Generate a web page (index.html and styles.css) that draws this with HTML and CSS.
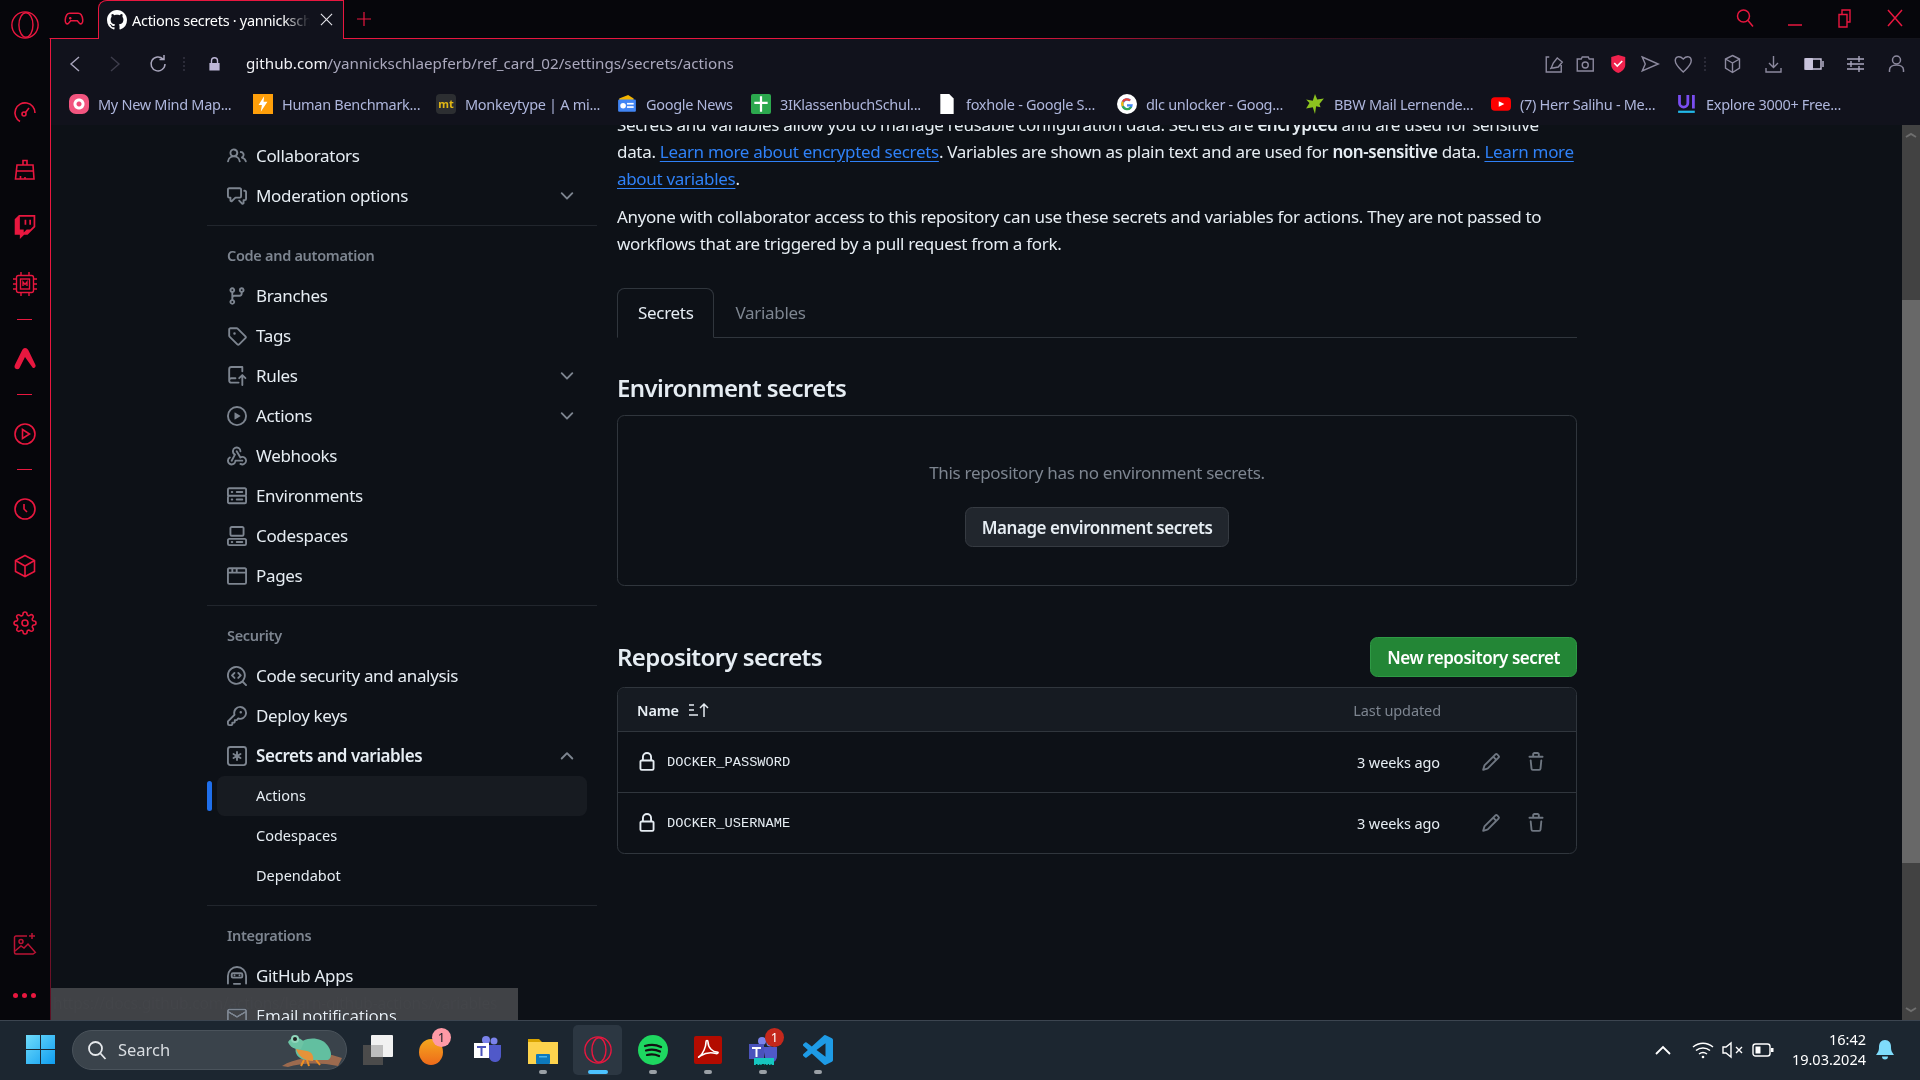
FILE: index.html
```html
<!DOCTYPE html>
<html lang="en">
<head>
<meta charset="UTF-8" />
<title>Actions secrets</title>
<link rel="stylesheet" href="styles.css">
</head>
<body>
<svg class="sprite" xmlns="http://www.w3.org/2000/svg">
  <symbol id="i-people" viewBox="0 0 16 16"><path d="M2 5.5a3.5 3.5 0 1 1 5.898 2.549 5.508 5.508 0 0 1 3.034 4.084.75.75 0 1 1-1.482.235 4 4 0 0 0-7.9 0 .75.75 0 0 1-1.482-.236A5.507 5.507 0 0 1 3.102 8.05 3.493 3.493 0 0 1 2 5.5ZM11 4a3.001 3.001 0 0 1 2.22 5.018 5.01 5.01 0 0 1 2.56 3.012.749.749 0 0 1-.885.954.752.752 0 0 1-.549-.514 3.507 3.507 0 0 0-2.522-2.372.75.75 0 0 1-.574-.73v-.352a.75.75 0 0 1 .416-.672A1.5 1.5 0 0 0 11 5.5.75.75 0 0 1 11 4Zm-5.5-.5a2 2 0 1 0-.001 3.999A2 2 0 0 0 5.5 3.5Z"/></symbol>
  <symbol id="i-comment" viewBox="0 0 16 16"><path d="M1.75 1h8.5c.966 0 1.75.784 1.75 1.75v5.5A1.75 1.75 0 0 1 10.25 10H7.061l-2.574 2.573A1.458 1.458 0 0 1 2 11.543V10h-.25A1.75 1.75 0 0 1 0 8.25v-5.5C0 1.784.784 1 1.75 1ZM1.5 2.75v5.5c0 .138.112.25.25.25h1a.75.75 0 0 1 .75.75v2.19l2.72-2.72a.749.749 0 0 1 .53-.22h3.5a.25.25 0 0 0 .25-.25v-5.5a.25.25 0 0 0-.25-.25h-8.5a.25.25 0 0 0-.25.25Zm13 2a.25.25 0 0 0-.25-.25h-.5a.75.75 0 0 1 0-1.5h.5c.966 0 1.75.784 1.75 1.75v5.5A1.75 1.75 0 0 1 14.25 12H14v1.543a1.458 1.458 0 0 1-2.487 1.03L9.22 12.28a.749.749 0 0 1 .326-1.275.749.749 0 0 1 .734.215l2.22 2.22v-2.19a.75.75 0 0 1 .75-.75h1a.25.25 0 0 0 .25-.25Z"/></symbol>
  <symbol id="i-branch" viewBox="0 0 16 16"><path d="M9.5 3.25a2.25 2.25 0 1 1 3 2.122V6A2.5 2.5 0 0 1 10 8.5H6a1 1 0 0 0-1 1v1.128a2.251 2.251 0 1 1-1.5 0V5.372a2.25 2.25 0 1 1 1.5 0v1.836A2.493 2.493 0 0 1 6 7h4a1 1 0 0 0 1-1v-.628A2.25 2.25 0 0 1 9.5 3.25Zm-6 0a.75.75 0 1 0 1.5 0 .75.75 0 0 0-1.5 0Zm8.25-.75a.75.75 0 1 0 0 1.5.75.75 0 0 0 0-1.5ZM4.25 12a.75.75 0 1 0 0 1.5.75.75 0 0 0 0-1.5Z"/></symbol>
  <symbol id="i-tag" viewBox="0 0 16 16"><path d="M1 7.775V2.75C1 1.784 1.784 1 2.75 1h5.025c.464 0 .91.184 1.238.513l6.25 6.25a1.75 1.75 0 0 1 0 2.474l-5.026 5.026a1.75 1.75 0 0 1-2.474 0l-6.25-6.25A1.752 1.752 0 0 1 1 7.775Zm1.5 0c0 .066.026.13.073.177l6.25 6.25a.25.25 0 0 0 .354 0l5.025-5.025a.25.25 0 0 0 0-.354l-6.25-6.25a.25.25 0 0 0-.177-.073H2.75a.25.25 0 0 0-.25.25ZM6 5a1 1 0 1 1 0 2 1 1 0 0 1 0-2Z"/></symbol>
  <symbol id="i-push" viewBox="0 0 16 16"><path d="M1 2.5A2.5 2.5 0 0 1 3.5 0h8.75a.75.75 0 0 1 .75.75v3.5a.75.75 0 0 1-1.5 0V1.5h-8a1 1 0 0 0-1 1v6.708A2.493 2.493 0 0 1 3.5 9h3.25a.75.75 0 0 1 0 1.5H3.5a1 1 0 0 0 0 2h5.75a.75.75 0 0 1 0 1.5H3.5A2.5 2.5 0 0 1 1 11.5Zm13.23 7.79h-.001l-1.224-1.224v6.184a.75.75 0 0 1-1.5 0V9.066L10.28 10.29a.75.75 0 0 1-1.06-1.061l2.505-2.504a.75.75 0 0 1 1.06 0L15.29 9.23a.751.751 0 0 1-.018 1.042.751.751 0 0 1-1.042.018Z"/></symbol>
  <symbol id="i-play" viewBox="0 0 16 16"><path d="M8 0a8 8 0 1 1 0 16A8 8 0 0 1 8 0ZM1.5 8a6.5 6.5 0 1 0 13 0 6.5 6.5 0 0 0-13 0Zm4.879-2.773 4.264 2.559a.25.25 0 0 1 0 .428l-4.264 2.559A.25.25 0 0 1 6 10.559V5.442a.25.25 0 0 1 .379-.215Z"/></symbol>
  <symbol id="i-webhook" viewBox="0 0 16 16"><path d="M5.5 4.25a2.25 2.25 0 0 1 4.5 0 .75.75 0 0 0 1.5 0 3.75 3.75 0 1 0-6.14 2.889l-2.272 4.258a.75.75 0 0 0 1.324.706L7 7.25a.75.75 0 0 0-.309-1.015A2.25 2.25 0 0 1 5.5 4.25Z"/><path d="M7.364 3.607a.75.75 0 0 1 1.03.257l2.608 4.349a3.75 3.75 0 1 1-.628 6.785.75.75 0 0 1 .752-1.299 2.25 2.25 0 1 0-.033-3.88.75.75 0 0 1-1.03-.256L7.107 4.636a.75.75 0 0 1 .257-1.03Z"/><path d="M2.9 8.776A.75.75 0 0 1 2.625 9.8 2.25 2.25 0 1 0 6 11.75a.75.75 0 0 1 .75-.751h5.5a.75.75 0 0 1 0 1.5H7.425a3.751 3.751 0 1 1-5.55-3.998.75.75 0 0 1 1.024.274Z"/></symbol>
  <symbol id="i-server" viewBox="0 0 16 16"><path d="M1.75 1h12.5c.966 0 1.75.784 1.75 1.75v4c0 .372-.116.717-.314 1 .198.283.314.628.314 1v4a1.75 1.75 0 0 1-1.75 1.75H1.75A1.75 1.75 0 0 1 0 13.25v-4c0-.372.116-.717.314-1a1.739 1.739 0 0 1-.314-1v-4C0 1.784.784 1 1.75 1ZM1.5 2.75v4c0 .138.112.25.25.25h12.5a.25.25 0 0 0 .25-.25v-4a.25.25 0 0 0-.25-.25H1.75a.25.25 0 0 0-.25.25Zm.25 5.75a.25.25 0 0 0-.25.25v4c0 .138.112.25.25.25h12.5a.25.25 0 0 0 .25-.25v-4a.25.25 0 0 0-.25-.25ZM7 4.75A.75.75 0 0 1 7.75 4h4.5a.75.75 0 0 1 0 1.5h-4.5A.75.75 0 0 1 7 4.75ZM7.75 10h4.5a.75.75 0 0 1 0 1.5h-4.5a.75.75 0 0 1 0-1.5ZM3 4.75A.75.75 0 0 1 3.75 4h.5a.75.75 0 0 1 0 1.5h-.5A.75.75 0 0 1 3 4.75ZM3.75 10h.5a.75.75 0 0 1 0 1.5h-.5a.75.75 0 0 1 0-1.5Z"/></symbol>
  <symbol id="i-codespaces" viewBox="0 0 16 16"><path d="M0 11.25c0-.966.784-1.75 1.75-1.75h12.5c.966 0 1.75.784 1.75 1.75v3A1.75 1.75 0 0 1 14.25 16H1.75A1.75 1.75 0 0 1 0 14.25Zm2-9.5C2 .784 2.784 0 3.75 0h8.5C13.216 0 14 .784 14 1.75v5a1.75 1.75 0 0 1-1.75 1.75h-8.5A1.75 1.75 0 0 1 2 6.75Zm1.75-.25a.25.25 0 0 0-.25.25v5c0 .138.112.25.25.25h8.5a.25.25 0 0 0 .25-.25v-5a.25.25 0 0 0-.25-.25Zm-2 9.5a.25.25 0 0 0-.25.25v3c0 .138.112.25.25.25h12.5a.25.25 0 0 0 .25-.25v-3a.25.25 0 0 0-.25-.25Z"/><path d="M7 12.75a.75.75 0 0 1 .75-.75h4.5a.75.75 0 0 1 0 1.5h-4.5a.75.75 0 0 1-.75-.75Zm-4 0a.75.75 0 0 1 .75-.75h.5a.75.75 0 0 1 0 1.5h-.5a.75.75 0 0 1-.75-.75Z"/></symbol>
  <symbol id="i-browser" viewBox="0 0 16 16"><path d="M0 2.75C0 1.784.784 1 1.75 1h12.5c.966 0 1.75.784 1.75 1.75v10.5A1.75 1.75 0 0 1 14.25 15H1.75A1.75 1.75 0 0 1 0 13.25ZM14.5 6h-13v7.25c0 .138.112.25.25.25h12.5a.25.25 0 0 0 .25-.25Zm-6-3.5v2h6V2.75a.25.25 0 0 0-.25-.25ZM5 2.5v2h2v-2Zm-3.25 0a.25.25 0 0 0-.25.25V4.5h2v-2Z"/></symbol>
  <symbol id="i-codescan" viewBox="0 0 16 16"><path d="M8.47 4.97a.75.75 0 0 0 0 1.06L9.94 7.5 8.47 8.97a.75.75 0 1 0 1.06 1.06l2-2a.75.75 0 0 0 0-1.06l-2-2a.75.75 0 0 0-1.06 0ZM6.53 6.03a.75.75 0 0 0-1.06-1.06l-2 2a.75.75 0 0 0 0 1.06l2 2a.75.75 0 1 0 1.06-1.06L5.06 7.5l1.47-1.47Z"/><path d="M12.246 13.307a7.501 7.501 0 1 1 1.06-1.06l2.474 2.473a.749.749 0 0 1-.326 1.275.749.749 0 0 1-.734-.215ZM1.5 7.5a6.002 6.002 0 0 0 3.608 5.504 6.002 6.002 0 0 0 6.486-1.117.789.789 0 0 1 .292-.293A6 6 0 1 0 1.5 7.5Z"/></symbol>
  <symbol id="i-key" viewBox="0 0 16 16"><path d="M10.5 0a5.499 5.499 0 1 1-1.288 10.848l-.932.932a.749.749 0 0 1-.53.22H7v.75a.749.749 0 0 1-.22.53l-.5.5a.749.749 0 0 1-.53.22H5v.75a.749.749 0 0 1-.22.53l-.5.5a.749.749 0 0 1-.53.22h-2A1.75 1.75 0 0 1 0 14.25v-2c0-.199.079-.389.22-.53l4.932-4.932A5.5 5.5 0 0 1 10.5 0Zm-4 5.5c-.001.431.069.86.205 1.269a.75.75 0 0 1-.181.768L1.5 12.56v1.69c0 .138.112.25.25.25h1.69l.06-.06v-1.19a.75.75 0 0 1 .75-.75h1.19l.06-.06v-1.19a.75.75 0 0 1 .75-.75h1.19l1.023-1.025a.75.75 0 0 1 .768-.18A4 4 0 1 0 6.5 5.5ZM11 6a1 1 0 1 1 0-2 1 1 0 0 1 0 2Z"/></symbol>
  <symbol id="i-asterisk" viewBox="0 0 16 16"><path d="M0 2.75A2.75 2.75 0 0 1 2.75 0h10.5A2.75 2.75 0 0 1 16 2.75v10.5A2.75 2.75 0 0 1 13.25 16H2.75A2.75 2.75 0 0 1 0 13.25ZM2.75 1.5c-.69 0-1.25.56-1.25 1.25v10.5c0 .69.56 1.25 1.25 1.25h10.5c.69 0 1.25-.56 1.25-1.25V2.75c0-.69-.56-1.25-1.25-1.25Z"/><path d="M8 4a.75.75 0 0 1 .75.75V6.7l1.69-.975a.75.75 0 0 1 .75 1.3L9.5 8l1.69.976a.75.75 0 0 1-.75 1.298L8.75 9.3v1.95a.75.75 0 0 1-1.5 0V9.3l-1.69.975a.75.75 0 0 1-.75-1.3L6.5 8l-1.69-.975a.75.75 0 0 1 .75-1.3l1.69.976V4.75A.75.75 0 0 1 8 4Z"/></symbol>
  <symbol id="i-hubot" viewBox="0 0 16 16"><path d="M.75 14V8a7.25 7.25 0 0 1 14.5 0v6M3.75 6.75c0-.6.4-1 1-1h6.5c.6 0 1 .4 1 1v1.5c0 .6-.4 1-1 1h-6.5c-.6 0-1-.4-1-1ZM6 7.5h.01M10 7.5h.01M5.5 14.25h5" fill="none" stroke="currentColor" stroke-width="1.5" stroke-linecap="round"/></symbol>
  <symbol id="i-mail" viewBox="0 0 16 16"><path d="M1.75 2h12.5c.966 0 1.75.784 1.75 1.75v8.5A1.75 1.75 0 0 1 14.25 14H1.75A1.75 1.75 0 0 1 0 12.25v-8.5C0 2.784.784 2 1.75 2ZM1.5 12.251c0 .138.112.25.25.25h12.5a.25.25 0 0 0 .25-.25V5.809L8.38 9.397a.75.75 0 0 1-.76 0L1.5 5.809v6.442Zm13-8.181v-.32a.25.25 0 0 0-.25-.25H1.75a.25.25 0 0 0-.25.25v.32L8 7.88Z"/></symbol>
  <symbol id="i-down" viewBox="0 0 16 16"><path d="M12.78 5.22a.749.749 0 0 1 0 1.06l-4.25 4.25a.749.749 0 0 1-1.06 0L3.22 6.28a.749.749 0 1 1 1.06-1.06L8 8.939l3.72-3.719a.749.749 0 0 1 1.06 0Z"/></symbol>
  <symbol id="i-up" viewBox="0 0 16 16"><path d="M3.22 10.53a.749.749 0 0 1 0-1.06l4.25-4.25a.749.749 0 0 1 1.06 0l4.25 4.25a.749.749 0 1 1-1.06 1.06L8 6.811 4.28 10.53a.749.749 0 0 1-1.06 0Z"/></symbol>
  <symbol id="i-lock" viewBox="0 0 16 16"><path d="M4 4a4 4 0 0 1 8 0v2h.25c.966 0 1.75.784 1.75 1.75v5.5A1.75 1.75 0 0 1 12.25 15h-8.5A1.75 1.75 0 0 1 2 13.25v-5.5C2 6.784 2.784 6 3.75 6H4Zm8.25 3.5h-8.5a.25.25 0 0 0-.25.25v5.5c0 .138.112.25.25.25h8.5a.25.25 0 0 0 .25-.25v-5.5a.25.25 0 0 0-.25-.25ZM10.5 6V4a2.5 2.5 0 1 0-5 0v2Z"/></symbol>
  <symbol id="i-pencil" viewBox="0 0 16 16"><path d="M11.013 1.427a1.75 1.75 0 0 1 2.474 0l1.086 1.086a1.75 1.75 0 0 1 0 2.474l-8.61 8.61c-.21.21-.47.364-.756.445l-3.251.93a.75.75 0 0 1-.927-.928l.929-3.25c.081-.286.235-.547.445-.758l8.61-8.61Zm.176 4.823L9.75 4.81l-6.286 6.287a.253.253 0 0 0-.064.108l-.558 1.953 1.953-.558a.253.253 0 0 0 .108-.064Zm1.238-3.763a.25.25 0 0 0-.354 0L10.811 3.75l1.439 1.44 1.263-1.263a.25.25 0 0 0 0-.354Z"/></symbol>
  <symbol id="i-trash" viewBox="0 0 16 16"><path d="M11 1.75V3h2.25a.75.75 0 0 1 0 1.5H2.75a.75.75 0 0 1 0-1.5H5V1.75C5 .784 5.784 0 6.75 0h2.5C10.216 0 11 .784 11 1.75ZM4.496 6.675l.66 6.6a.25.25 0 0 0 .249.225h5.19a.25.25 0 0 0 .249-.225l.66-6.6a.75.75 0 0 1 1.492.149l-.66 6.6A1.748 1.748 0 0 1 10.595 15h-5.19a1.75 1.75 0 0 1-1.741-1.575l-.66-6.6a.75.75 0 1 1 1.492-.15ZM6.5 1.75V3h3V1.75a.25.25 0 0 0-.25-.25h-2.5a.25.25 0 0 0-.25.25Z"/></symbol>
  <symbol id="i-github" viewBox="0 0 16 16"><path d="M8 0c4.42 0 8 3.58 8 8a8.013 8.013 0 0 1-5.45 7.59c-.4.08-.55-.17-.55-.38 0-.27.01-1.13.01-2.2 0-.75-.25-1.23-.54-1.48 1.78-.2 3.65-.88 3.65-3.95 0-.88-.31-1.59-.82-2.15.08-.2.36-1.02-.08-2.12 0 0-.67-.22-2.2.82-.64-.18-1.32-.27-2-.27-.68 0-1.36.09-2 .27-1.53-1.03-2.2-.82-2.2-.82-.44 1.1-.16 1.92-.08 2.12-.51.56-.82 1.28-.82 2.15 0 3.06 1.86 3.75 3.64 3.95-.23.2-.44.55-.51 1.07-.46.21-1.61.55-2.33-.66-.15-.24-.6-.83-1.23-.82-.67.01-.27.38.01.53.34.19.73.9.82 1.13.16.45.68 1.31 2.69.94 0 .67.01 1.3.01 1.49 0 .21-.15.45-.55.38A7.995 7.995 0 0 1 0 8c0-4.42 3.58-8 8-8Z"/></symbol>
  <symbol id="i-opera" viewBox="0 0 32 32"><g fill="none" stroke="currentColor" stroke-width="1.5"><circle cx="16" cy="16" r="14"/><ellipse cx="17" cy="16" rx="7.5" ry="13"/></g></symbol>
</svg>

<div class="window">
  <header class="titlebar">
    <div class="opera-slot"><svg class="ic-26 crimson"><use href="#i-opera"/></svg></div>
    <div class="game-slot">
      <svg class="ic-20 crimson" viewBox="0 0 24 24" fill="none" stroke="currentColor" stroke-width="1.8"><path d="M7 5h10c3 0 5 3 5.5 8 .4 4-2 6-4 4l-2.500-3H8l-2.500 3c-2 2-4.400 0-4-4C2 8 4 5 7 5Z"/><path d="M6 11h3M7.500 9.500v3M16 11h.01M18 11h.01"/></svg>
    </div>
    <div class="tab">
      <svg class="ic-20 tab-favicon"><use href="#i-github"/></svg>
      <span class="tab-title">Actions secrets · yannickschlaepferb</span>
      <svg class="tab-close" viewBox="0 0 14 14" fill="none" stroke="#e4e4ea" stroke-width="1.2"><path d="M1 1l12 12M13 1L1 13"/></svg>
    </div>
    <svg class="new-tab crimson" viewBox="0 0 14 14" fill="none" stroke="currentColor" stroke-width="1.2"><path d="M7 0v14M0 7h14"/></svg>
    <div class="win-controls crimson">
      <svg class="ic-20" viewBox="0 0 20 20" fill="none" stroke="currentColor" stroke-width="1.5"><circle cx="8.500" cy="8" r="6"/><path d="M13 12.500l5 6"/></svg>
      <svg class="ic-20" viewBox="0 0 20 20" fill="none" stroke="currentColor" stroke-width="1.5"><path d="M3 17h14"/></svg>
      <svg class="ic-20" viewBox="0 0 20 20" fill="none" stroke="currentColor" stroke-width="1.4"><path d="M4 6.500h8V19H4zM7 6V2h8v12h-3"/></svg>
      <svg class="ic-20" viewBox="0 0 20 20" fill="none" stroke="currentColor" stroke-width="1.5"><path d="M3 2l14 16M17 2L3 18"/></svg>
    </div>
  </header>

  <div class="shell">
    <aside class="rail crimson">
      <svg class="rail-icon" viewBox="0 0 24 24" fill="none" stroke="currentColor" stroke-width="1.6"><path d="M7 20.500A10 10 0 1 1 22 12M22 16v.01M20 19v.01"/><circle cx="11" cy="13" r="2"/><path d="M12.500 11.500L16 7"/></svg>
      <svg class="rail-icon" viewBox="0 0 24 24" fill="none" stroke="currentColor" stroke-width="1.6"><path d="M10 7V2.500h4V7M4 7h16l1 14H2.500ZM3.500 13h17M7.500 21v-3M12 21v-2"/></svg>
      <svg class="rail-icon" viewBox="0 0 24 24" fill="currentColor"><path d="M11.571 4.714h1.715v5.143H11.570zm4.715 0H18v5.143h-1.714zM6 0L1.714 4.286v15.428h5.143V24l4.286-4.286h3.428L22.286 12V0zm14.571 11.143l-3.428 3.428h-3.429l-3 3v-3H6.857V1.714h13.714Z"/></svg>
      <svg class="rail-icon" viewBox="0 0 24 24" fill="none" stroke="currentColor" stroke-width="1.4"><rect x="3.500" y="3.500" width="17" height="17" rx="2"/><rect x="7.500" y="7" width="9" height="10"/><path d="M10 14v-4l2 2.500 2-2.500v4M0 7h3M0 12h3M0 17h3M21 7h3M21 12h3M21 17h3M8 0v3M16 0v3M8 21v3M16 21v3"/></svg>
      <span class="rail-dash"></span>
      <svg class="rail-icon" viewBox="0 0 24 24" fill="currentColor"><path d="M12 1c2 0 3 1.500 4 3.500L22.500 18c.8 2-1.500 4-3 2.500L12 10 6.500 21c-1 2-5 1.500-5-1.500 0-.8.3-1.500.7-2.300L9 3.500C9.800 2 10.500 1 12 1Z"/></svg>
      <span class="rail-dash"></span>
      <svg class="rail-icon" viewBox="0 0 24 24" fill="none" stroke="currentColor" stroke-width="1.6"><circle cx="12" cy="12" r="10"/><path d="M9.500 7.500l7 4.500-7 4.500Z"/></svg>
      <span class="rail-dash"></span>
      <svg class="rail-icon" viewBox="0 0 24 24" fill="none" stroke="currentColor" stroke-width="1.6"><circle cx="12" cy="12" r="10"/><path d="M11 7v5l3 3"/></svg>
      <svg class="rail-icon" viewBox="0 0 24 24" fill="none" stroke="currentColor" stroke-width="1.6"><path d="M12 1.500l9.500 5v11L12 22.500l-9.500-5v-11ZM2.500 6.500L12 12l9.500-5.500M12 12v10.500"/></svg>
      <svg class="rail-icon" viewBox="0 0 24 24" fill="none" stroke="currentColor" stroke-width="1.6"><path d="M12 15a3 3 0 1 0 0-6 3 3 0 0 0 0 6z"/><path d="M19.4 15a1.65 1.65 0 0 0 .33 1.82l.06.06a2 2 0 0 1 0 2.83 2 2 0 0 1-2.83 0l-.06-.06a1.65 1.65 0 0 0-1.82-.33 1.65 1.65 0 0 0-1 1.51V21a2 2 0 0 1-2 2 2 2 0 0 1-2-2v-.09A1.65 1.65 0 0 0 9 19.4a1.65 1.65 0 0 0-1.82.33l-.06.06a2 2 0 0 1-2.83 0 2 2 0 0 1 0-2.83l.06-.06a1.65 1.65 0 0 0 .33-1.82 1.65 1.65 0 0 0-1.51-1H3a2 2 0 0 1-2-2 2 2 0 0 1 2-2h.09A1.65 1.65 0 0 0 4.6 9a1.65 1.65 0 0 0-.33-1.82l-.06-.06a2 2 0 0 1 0-2.83 2 2 0 0 1 2.83 0l.06.06a1.65 1.65 0 0 0 1.82.33H9a1.65 1.65 0 0 0 1-1.51V3a2 2 0 0 1 2-2 2 2 0 0 1 2 2v.09a1.65 1.65 0 0 0 1 1.51 1.65 1.65 0 0 0 1.82-.33l.06-.06a2 2 0 0 1 2.83 0 2 2 0 0 1 0 2.83l-.06.06a1.65 1.65 0 0 0-.33 1.82V9a1.65 1.65 0 0 0 1.51 1H21a2 2 0 0 1 2 2 2 2 0 0 1-2 2h-.09a1.65 1.65 0 0 0-1.51 1z"/></svg>
      <div class="rail-bottom">
        <svg class="rail-icon rail-dim" viewBox="0 0 24 24" fill="none" stroke="currentColor" stroke-width="1.5"><path d="M14 4H3a1.500 1.500 0 0 0-1.500 1.500v15A1.500 1.500 0 0 0 3 22h17l3-2"/><circle cx="8" cy="9.500" r="2"/><path d="M2 19l6-5 3 2 4-4 7 8M19 1v6M16 4h6"/></svg>
        <span class="rail-dots"><i></i><i></i><i></i></span>
      </div>
    </aside>

    <div class="pane">
      <div class="toolbar">
        <svg class="nav-btn" viewBox="0 0 40 24" fill="none" stroke="#a9a6bd" stroke-width="1.4"><path d="M24 5l-8 7 8 7"/></svg>
        <svg class="nav-btn" viewBox="0 0 40 24" fill="none" stroke="#3e3d4c" stroke-width="1.4"><path d="M16 5l8 7-8 7"/></svg>
        <svg class="nav-btn reload" viewBox="0 0 40 24" fill="none" stroke="#a9a6bd" stroke-width="1.5"><path d="M27 12a7 7 0 1 1-2-5M26 3v4.500h-4.500"/></svg>
        <span class="nav-sep"></span>
        <svg class="lock" viewBox="0 0 14 16" fill="#bdb6d6"><path d="M3 7V4.500a4 4 0 0 1 8 0V7h1.500v8h-11V7ZM4.500 7h5V4.500a2.500 2.500 0 0 0-5 0Z"/></svg>
        <div class="url"><span class="url-host">github.com</span>/yannickschlaepferb/ref_card_02/settings/secrets/actions</div>
        <div class="tools">
          <svg class="tool" viewBox="0 0 32 24" fill="none" stroke="#8c899e" stroke-width="1.4"><path d="M12 5H9v15h15v-7M14 16l2-5 4-5 5 4-4 5-5 1ZM13 17l2-2"/></svg>
          <svg class="tool" viewBox="0 0 32 24" fill="none" stroke="#8c899e" stroke-width="1.4"><path d="M8 7h4l1-2h6l1 2h4v12H8Z"/><circle cx="16" cy="13" r="3"/></svg>
          <svg class="tool" viewBox="0 0 32 24"><path d="M9 5l7-2 7 2v8c0 4-4 7-7 8-3-1-7-4-7-8Z" fill="#f0224d"/><path d="M12 11l3 3 5-5" fill="none" stroke="#fff" stroke-width="1.6"/></svg>
          <svg class="tool" viewBox="0 0 32 24" fill="none" stroke="#8c899e" stroke-width="1.4"><path d="M8 5l16 7-16 7 3-7Z"/></svg>
          <svg class="tool" viewBox="0 0 32 24" fill="none" stroke="#8c899e" stroke-width="1.4"><path d="M16 20C12 16 8 13 8 8.500 8 5 12 3 16 7c4-4 8-2 8 1.500 0 4.500-4 7.500-8 11.500Z"/></svg>
          <span class="tool-sep"></span>
          <svg class="tool wide" viewBox="0 0 41 24" fill="none" stroke="#8c899e" stroke-width="1.4"><path d="M20.500 3.500l7 3.500v9l-7 4.500-7-4.500V7ZM13.500 7l7 4 7-4M20.500 11v9"/></svg>
          <svg class="tool wide" viewBox="0 0 41 24" fill="none" stroke="#8c899e" stroke-width="1.4"><path d="M20.500 4v11M16 11l4.500 4.500L25 11M13 16v4h15v-4"/></svg>
          <svg class="tool wide" viewBox="0 0 41 24"><rect x="11" y="6" width="8" height="12" rx="1" fill="#c9c4dc"/><path d="M11 7h16v10H11Z" fill="none" stroke="#c9c4dc" stroke-width="1.4"/><rect x="28" y="9" width="2" height="6" fill="#8c899e"/></svg>
          <svg class="tool wide" viewBox="0 0 41 24" fill="none" stroke="#a9a6bd" stroke-width="1.4"><path d="M12 7h17M12 12h17M12 17h17M24 4v6M16 9v6M24 14v6"/></svg>
          <svg class="tool wide" viewBox="0 0 41 24" fill="none" stroke="#8c899e" stroke-width="1.5"><circle cx="20.500" cy="8" r="4"/><path d="M13.500 20v-2c0-3 3-5 7-5s7 2 7 5v2"/></svg>
        </div>
      </div>

      <nav class="bookmarks">
        <a class="bm"><span class="fav fav-mind"></span>My New Mind Map...</a>
        <a class="bm"><span class="fav fav-bench"><svg viewBox="0 0 18 18"><path d="M10 2L5 10h3l-1 6 6-9h-3.500Z" fill="#fff"/></svg></span>Human Benchmark...</a>
        <a class="bm"><span class="fav fav-mt">mt</span>Monkeytype | A mi...</a>
        <a class="bm"><span class="fav"><svg viewBox="0 0 18 18"><path d="M2 4l8-3 5 3v3H2Z" fill="#f4b400"/><rect x="1" y="5" width="16" height="11" rx="1" fill="#4285f4"/><rect x="9" y="8" width="6" height="1.500" fill="#fff"/><rect x="9" y="11" width="6" height="1.500" fill="#fff"/><circle cx="5.500" cy="10.500" r="2.500" fill="#fff"/></svg></span>Google News</a>
        <a class="bm"><span class="fav fav-klassen"><svg viewBox="0 0 18 18"><path d="M8 2h2v14H8zM3 7h12v2H3z" fill="#fff"/></svg></span>3IKlassenbuchSchul...</a>
        <a class="bm"><span class="fav"><svg viewBox="0 0 18 18"><path d="M3 0h8l4 4v14H3Z" fill="#fff"/></svg></span>foxhole - Google S...</a>
        <a class="bm"><span class="fav"><svg viewBox="0 0 18 18"><circle cx="9" cy="9" r="9" fill="#fff"/><path d="M14 9.200H9v2h2.800A3.200 3.200 0 1 1 11 6.600l1.500-1.500A5.300 5.300 0 1 0 14.300 9Z" fill="#4285f4"/><path d="M4.300 6.500A5.300 5.300 0 0 1 12.500 5.100L11 6.600a3.200 3.200 0 0 0-4.900.900Z" fill="#ea4335"/><path d="M4.300 11.500a5.300 5.300 0 0 1 0-5l1.800 1a3.200 3.200 0 0 0 0 3Z" fill="#fbbc05"/><path d="M4.300 11.500l1.800-1a3.200 3.200 0 0 0 5.700.7l1.800 1a5.300 5.300 0 0 1-9.300-.700Z" fill="#34a853"/></svg></span>dlc unlocker - Goog...</a>
        <a class="bm"><span class="fav"><svg viewBox="0 0 18 18"><path d="M9 0l2 5 6-1-4 5 1 3-4-1-1 7-2-6-6 1 3-5-3-3 6 1Z" fill="#8cc21f"/></svg></span>BBW Mail Lernende...</a>
        <a class="bm"><span class="fav"><svg viewBox="0 0 18 18"><rect x="0" y="3" width="18" height="12" rx="3.500" fill="#f00"/><path d="M7 6.500L12 9l-5 2.500Z" fill="#fff"/></svg></span>(7) Herr Salihu - Me...</a>
        <a class="bm"><span class="fav"><svg viewBox="0 0 18 18"><path d="M1 1h2.500v7a2.500 2.500 0 0 0 5 0V1H11v7a5 5 0 0 1-10 0ZM13.500 1H16v12h-2.500Z" fill="#7a4df0"/><rect x="1" y="15" width="15" height="2" fill="#22b8e8"/></svg></span>Explore 3000+ Free...</a>
      </nav>

      <div class="page">
        <div class="viewport">
          <div class="sidebar">
            <div class="nav-group">
              <a class="nav-row"><svg class="oct"><use href="#i-people"/></svg>Collaborators</a>
              <a class="nav-row"><svg class="oct"><use href="#i-comment"/></svg>Moderation options<svg class="chev"><use href="#i-down"/></svg></a>
            </div>
            <div class="nav-group">
              <h3 class="nav-heading">Code and automation</h3>
              <a class="nav-row"><svg class="oct"><use href="#i-branch"/></svg>Branches</a>
              <a class="nav-row"><svg class="oct"><use href="#i-tag"/></svg>Tags</a>
              <a class="nav-row"><svg class="oct"><use href="#i-push"/></svg>Rules<svg class="chev"><use href="#i-down"/></svg></a>
              <a class="nav-row"><svg class="oct"><use href="#i-play"/></svg>Actions<svg class="chev"><use href="#i-down"/></svg></a>
              <a class="nav-row"><svg class="oct"><use href="#i-webhook"/></svg>Webhooks</a>
              <a class="nav-row"><svg class="oct"><use href="#i-server"/></svg>Environments</a>
              <a class="nav-row"><svg class="oct"><use href="#i-codespaces"/></svg>Codespaces</a>
              <a class="nav-row"><svg class="oct"><use href="#i-browser"/></svg>Pages</a>
            </div>
            <div class="nav-group">
              <h3 class="nav-heading">Security</h3>
              <a class="nav-row"><svg class="oct"><use href="#i-codescan"/></svg>Code security and analysis</a>
              <a class="nav-row"><svg class="oct"><use href="#i-key"/></svg>Deploy keys</a>
              <a class="nav-row strong"><svg class="oct"><use href="#i-asterisk"/></svg>Secrets and variables<svg class="chev"><use href="#i-up"/></svg></a>
              <a class="nav-row sub active">Actions</a>
              <a class="nav-row sub">Codespaces</a>
              <a class="nav-row sub">Dependabot</a>
            </div>
            <div class="nav-group">
              <h3 class="nav-heading">Integrations</h3>
              <a class="nav-row"><svg class="oct"><use href="#i-hubot"/></svg>GitHub Apps</a>
              <a class="nav-row"><svg class="oct"><use href="#i-mail"/></svg>Email notifications</a>
            </div>
          </div>

          <main class="content">
            <p class="intro">Secrets and variables allow you to manage reusable configuration data. Secrets are <b>encrypted</b> and are used for sensitive<br>data. <a class="link">Learn more about encrypted secrets</a>. Variables are shown as plain text and are used for <b>non-sensitive</b> data. <a class="link">Learn more<br>about variables</a>.</p>
            <p class="intro second">Anyone with collaborator access to this repository can use these secrets and variables for actions. They are not passed to<br>workflows that are triggered by a pull request from a fork.</p>

            <div class="tabs">
              <a class="tab-item selected">Secrets</a>
              <a class="tab-item">Variables</a>
            </div>

            <h2 class="section-title env-title">Environment secrets</h2>
            <div class="blank">
              <p class="blank-text">This repository has no environment secrets.</p>
              <a class="btn">Manage environment secrets</a>
            </div>

            <div class="section-head">
              <h2 class="section-title">Repository secrets</h2>
              <a class="btn btn-green">New repository secret</a>
            </div>
            <div class="secrets">
              <div class="secrets-head">
                <span class="col-name">Name</span>
                <svg class="sort" viewBox="0 0 22 16" fill="none" stroke="#e6edf3" stroke-width="1.5"><path d="M1 3h5M1 8h5M1 13h9M16 15V2M12 6l4-4 4 4"/></svg>
                <span class="col-updated">Last updated</span>
              </div>
              <div class="secret-row">
                <svg class="oct lock-oct"><use href="#i-lock"/></svg>
                <code class="secret-name">DOCKER_PASSWORD</code>
                <span class="secret-age">3 weeks ago</span>
                <svg class="oct action"><use href="#i-pencil"/></svg>
                <svg class="oct action"><use href="#i-trash"/></svg>
              </div>
              <div class="secret-row">
                <svg class="oct lock-oct"><use href="#i-lock"/></svg>
                <code class="secret-name">DOCKER_USERNAME</code>
                <span class="secret-age">3 weeks ago</span>
                <svg class="oct action"><use href="#i-pencil"/></svg>
                <svg class="oct action"><use href="#i-trash"/></svg>
              </div>
            </div>
          </main>
          <div class="status-bubble">https://docs.github.com/actions/learn-github-actions/variables</div>
        </div>
        <div class="scrollbar">
          <svg class="scroll-arrow" viewBox="0 0 18 20" fill="none" stroke="#6e6e6e" stroke-width="2"><path d="M4 12l5-3 5 3"/></svg>
          <div class="scroll-before"></div>
          <div class="scroll-thumb"></div>
          <div class="scroll-after"></div>
          <svg class="scroll-arrow" viewBox="0 0 18 20" fill="none" stroke="#6e6e6e" stroke-width="2"><path d="M4 8l5 3 5-3"/></svg>
        </div>
      </div>
    </div>
  </div>

  <footer class="taskbar">
    <svg class="start" viewBox="0 0 30 30"><defs><linearGradient id="win" x1="0" y1="0" x2="1" y2="1"><stop offset="0" stop-color="#6fdcfb"/><stop offset="1" stop-color="#0f9df0"/></linearGradient></defs><path d="M0 0h14.500v14.500H0zM15.500 0H30v14.500H15.500zM0 15.500h14.500V30H0zM15.500 15.500H30V30H15.500z" fill="url(#win)"/></svg>
    <div class="search">
      <svg class="search-icon" viewBox="0 0 20 20" fill="none" stroke="#e6e9ec" stroke-width="1.8"><circle cx="8.500" cy="8.500" r="6.500"/><path d="M13.500 13.500L18.500 19"/></svg>
      <span>Search</span>
      <svg class="frog" viewBox="0 0 62 34">
        <path d="M2 33C14 25 34 24 52 22l10 3-4 8C40 29 20 30 8 34Z" fill="#9c6a4e"/>
        <path d="M16 14c6-10 24-12 32-1 4 6 4 12 0 14H26C18 26 14 20 16 14Z" fill="#62bfa0"/>
        <path d="M16 16c3 8 9 12 17 12 1-5-1-9-6-10Z" fill="#e5933a"/>
        <path d="M8 9c4-6 12-5 16 0l-3 7c-6 1-11-2-13-7Z" fill="#6cc4a4"/>
        <circle cx="15" cy="6" r="4" fill="#8fd6bb"/><circle cx="15" cy="6" r="2" fill="#222"/>
        <path d="M24 27l-3 6M27 27l2 6M36 27l4 5" stroke="#ee8f22" stroke-width="2"/>
      </svg>
    </div>
    <div class="task-item">
      <svg class="task-icon" viewBox="0 0 30 30"><rect x="0" y="10" width="20" height="20" fill="#4b4b4b"/><rect x="8" y="0" width="22" height="22" rx="1" fill="#f1f1f1"/><rect x="8" y="10" width="12" height="12" fill="#bdbdbd"/></svg>
    </div>
    <div class="task-item">
      <svg class="task-icon" viewBox="0 0 30 30"><defs><linearGradient id="blob" x1="0" y1="0" x2="0" y2="1"><stop offset="0" stop-color="#f5a81e"/><stop offset="1" stop-color="#ee6a1a"/></linearGradient></defs><ellipse cx="13" cy="17" rx="12" ry="13" fill="url(#blob)"/></svg>
      <span class="badge badge-pink">1</span>
    </div>
    <div class="task-item">
      <svg class="task-icon" viewBox="0 0 30 30"><circle cx="21" cy="6" r="3.500" fill="#7b83eb"/><path d="M14 10h14v10a6 6 0 0 1-12 2Z" fill="#5059c9"/><circle cx="13" cy="5" r="4" fill="#7b83eb"/><rect x="1" y="8" width="15" height="15" fill="#fff"/><path d="M4 11h9v2h-3.500v8h-2v-8H4Z" fill="#4b53bc"/></svg>
    </div>
    <div class="task-item has-dot">
      <svg class="task-icon" viewBox="0 0 30 30"><path d="M0 4h11l3 3h16v22H0Z" fill="#d9a400"/><rect x="0" y="7" width="30" height="22" fill="#fdd34d"/><rect x="8" y="19" width="14" height="10" rx="1" fill="#0d79bd"/><rect x="11" y="21" width="8" height="1.500" fill="#49b7ee"/></svg>
      <i class="dot"></i>
    </div>
    <div class="task-item current">
      <svg class="task-icon opera-task"><use href="#i-opera"/></svg>
      <i class="dot dot-blue"></i>
    </div>
    <div class="task-item has-dot">
      <svg class="task-icon" viewBox="0 0 30 30"><circle cx="15" cy="15" r="15" fill="#1ed760"/><path d="M7 11c6-2 11-1.500 16 1M8 15.500c5-1.500 10-1 14 1M9 20c4-1 8-.8 12 1" fill="none" stroke="#121212" stroke-width="2.2" stroke-linecap="round"/></svg>
      <i class="dot"></i>
    </div>
    <div class="task-item has-dot">
      <svg class="task-icon" viewBox="0 0 30 30"><rect x="1" y="1" width="28" height="28" rx="2" fill="#b30b00"/><path d="M6 22c4-3 7-10 7-15 0-2 2-2 2 0 0 6 5 10 9 10 2 0 1 2-1 1.500-6-1.500-10-1-15 2-2 1-3 2-2 1.500Z" fill="none" stroke="#fff" stroke-width="1.6"/></svg>
      <i class="dot"></i>
    </div>
    <div class="task-item has-dot">
      <svg class="task-icon" viewBox="0 0 30 30"><circle cx="22" cy="8" r="3.500" fill="#7b83eb"/><path d="M15 12h14v9a6 6 0 0 1-12 1Z" fill="#5059c9"/><circle cx="14" cy="6" r="4" fill="#7b83eb"/><rect x="1" y="9" width="15" height="15" fill="#4b53bc"/><path d="M4 12h9v2H9.500v8h-2v-8H4Z" fill="#fff"/><rect x="6" y="23" width="20" height="7" fill="#16c7c0"/></svg>
      <span class="new-tag">NEW</span>
      <span class="badge badge-red">1</span>
      <i class="dot"></i>
    </div>
    <div class="task-item has-dot">
      <svg class="task-icon" viewBox="0 0 24 24" fill="#1e9be6"><path d="M23.15 2.587L18.21.21a1.494 1.494 0 0 0-1.705.29l-9.46 8.63-4.12-3.128a.999.999 0 0 0-1.276.057L.327 7.261A1 1 0 0 0 .326 8.74L3.899 12 .326 15.26a1 1 0 0 0 .001 1.479L1.65 17.94a.999.999 0 0 0 1.276.057l4.12-3.128 9.46 8.63a1.492 1.492 0 0 0 1.704.29l4.942-2.377A1.5 1.5 0 0 0 24 20.06V3.939a1.5 1.5 0 0 0-.85-1.352zm-5.146 14.861L10.826 12l7.178-5.448v10.896z"/></svg>
      <i class="dot"></i>
    </div>

    <div class="tray">
      <svg class="tray-icon tray-chevron" viewBox="0 0 20 20" fill="none" stroke="#fff" stroke-width="1.8"><path d="M3 14l7-7 7 7"/></svg>
      <svg class="tray-icon tray-wifi" viewBox="0 0 22 20" fill="none" stroke="#fff" stroke-width="1.5"><path d="M1 7c6-5 14-5 20 0M4 10.500c4-3.500 10-3.500 14 0M7 14c2.500-2 5.500-2 8 0"/><circle cx="11" cy="17" r="1.300" fill="#fff" stroke="none"/></svg>
      <svg class="tray-icon" viewBox="0 0 22 20" fill="none" stroke="#fff" stroke-width="1.4"><path d="M1 7v6h3l5 4V3L4 7ZM14 7l6 6M20 7l-6 6"/></svg>
      <svg class="tray-icon" viewBox="0 0 22 20"><rect x="1" y="4" width="17" height="12" rx="2.500" fill="none" stroke="#fff" stroke-width="1.4"/><rect x="3.500" y="6.500" width="5" height="7" fill="#fff"/><rect x="19" y="8" width="2.500" height="4" fill="#fff"/></svg>
      <div class="clock"><span>16:42</span><span>19.03.2024</span></div>
      <svg class="bell" viewBox="0 0 18 20" fill="#7fdcfb"><path d="M9 0c4 0 6 3 6 7 0 4 1 5 3 8H0c2-3 3-4 3-8 0-4 2-7 6-7ZM6 16.500h6a3 3 0 0 1-6 0Z"/></svg>
    </div>
  </footer>
</div>
</body>
</html>
```

FILE: styles.css
```css
* {
  box-sizing: border-box;
}

html, body {
  margin: 0;
  height: 100%;
  overflow: hidden;
}

body {
  font-family: "Noto Sans", "Open Sans", sans-serif;
  background: #0d1117;
  color: #e6edf3;
}

a { color: inherit; text-decoration: none; }
svg { display: block; flex-shrink: 0; }
p, h2, h3 { margin: 0; }

.sprite { display: none; }
.crimson { color: #e8173f; }
.ic-20 { width: 20px; height: 20px; }
.ic-26 { width: 30px; height: 30px; }

.window {
  width: 1920px;
  height: 1080px;
  display: flex;
  flex-direction: column;
}

/* Title bar and tab strip */
.titlebar {
  height: 39px;
  flex-shrink: 0;
  display: flex;
  align-items: flex-start;
  background: #06060b;
  border-bottom: 1px solid;
  border-image: linear-gradient(90deg, #06060b 50px, #e8173f 51px, #e8173f 1000px, #3a1020 1300px, #14141c 1500px) 1;
}

.opera-slot {
  width: 51px;
  height: 38px;
  padding: 10px 0 0 10px;
}

.game-slot {
  width: 47px;
  height: 38px;
  padding: 9px 0 0 13px;
}

.tab {
  width: 246px;
  height: 39px;
  margin-bottom: -1px;
  display: flex;
  align-items: center;
  padding: 0 10px 1px 8px;
  background: #11121c;
  border: 1px solid #e8173f;
  border-bottom: none;
  border-top-left-radius: 9px 8px;
  color: #fff;
  font-size: 14.5px;
  letter-spacing: -0.3px;
}

.tab-favicon { fill: #fff; margin-right: 5px; }

.tab-title {
  flex: 1;
  overflow: hidden;
  white-space: nowrap;
  -webkit-mask-image: linear-gradient(90deg, #000 85%, transparent);
  mask-image: linear-gradient(90deg, #000 85%, transparent);
}

.tab-close { width: 13px; height: 13px; margin-left: 10px; }
.new-tab { width: 14px; height: 14px; margin: 12px 0 0 13px; }

.win-controls {
  margin-left: auto;
  display: flex;
  gap: 30px;
  padding: 8px 15px 0 0;
}

/* Browser frame */
.shell {
  flex: 1;
  min-height: 0;
  display: flex;
}

.rail {
  width: 51px;
  flex-shrink: 0;
  display: flex;
  flex-direction: column;
  align-items: center;
  padding: 29px 1px 0 0;
  background: #06060b;
  border-right: 1px solid;
  border-image: linear-gradient(180deg, #e8173f 60%, #5a1024 100%) 1;
}

.rail-icon {
  width: 24px;
  height: 24px;
  margin-top: 33px;
}

.rail-dim { opacity: 0.8; }

.rail-dash {
  width: 15px;
  height: 1px;
  margin-top: 23px;
  background: #e8173f;
}

.rail-dash + .rail-icon { margin-top: 27px; }

.rail-bottom {
  margin-top: auto;
  display: flex;
  flex-direction: column;
  align-items: center;
  padding-bottom: 22px;
}

.rail-dots {
  display: flex;
  gap: 4px;
  margin-top: 37px;
}

.rail-dots i {
  width: 5px;
  height: 5px;
  border-radius: 50%;
  background: #e8173f;
}

.pane {
  flex: 1;
  min-width: 0;
  display: flex;
  flex-direction: column;
}

.toolbar {
  height: 49px;
  flex-shrink: 0;
  display: flex;
  align-items: center;
  padding: 0 3px 0 4px;
  background: #11121c;
}

.nav-btn { width: 40px; height: 24px; }
.reload { margin-left: 3px; }

.nav-sep {
  width: 2px;
  height: 14px;
  margin-left: 5px;
  background: repeating-linear-gradient(180deg, #2b2b38 0 2px, transparent 2px 4px);
}

.lock { width: 13px; height: 16px; margin-left: 23px; }

.url {
  margin-left: 25px;
  padding-bottom: 1px;
  font-size: 15.2px;
  color: #aaa8bd;
  white-space: nowrap;
}

.url-host { color: #f1f1f5; }

.tools {
  margin-left: auto;
  display: flex;
  align-items: center;
}

.tool { width: 32.5px; height: 24px; }
.tool.wide { width: 41px; }

.tool-sep {
  width: 2px;
  height: 14px;
  margin: 0 6px 0 5px;
  background: repeating-linear-gradient(180deg, #2b2b38 0 2px, transparent 2px 4px);
}

.bookmarks {
  height: 37px;
  flex-shrink: 0;
  display: grid;
  grid-template-columns: 184px 183px 181px 134px 186px 180px 188px 186px 186px auto;
  align-items: center;
  padding: 0 0 6px 18px;
  background: #11121c;
  color: #aeb6dc;
  font-size: 14.5px;
  letter-spacing: -0.3px;
  white-space: nowrap;
}

.bm {
  display: flex;
  align-items: center;
  gap: 9px;
}

.fav {
  width: 20px;
  height: 20px;
  flex-shrink: 0;
  display: block;
}

.fav svg { width: 100%; height: 100%; }

.fav-mind { background: radial-gradient(circle, #f04a78 0 2px, #fff 3px 5px, #f2557f 6px); border-radius: 7px; }
.fav-bench { background: #ff9f0a; }
.fav-mt { background: #2c2e31; color: #e2b714; font: 700 11px/20px "Noto Sans", sans-serif; letter-spacing: 0; text-align: center; border-radius: 4px; }
.fav-klassen { background: #2ca84e; border-radius: 2px; }

/* Web page */
.page {
  flex: 1;
  min-height: 0;
  display: flex;
  background: #0d1117;
}

.viewport {
  flex: 1;
  min-width: 0;
  overflow: hidden;
  position: relative;
  display: flex;
  align-items: flex-start;
  padding-left: 156px;
}

.sidebar {
  width: 390px;
  flex-shrink: 0;
  margin: 11px 20px 0 0;
  font-size: 17px;
  letter-spacing: -0.33px;
}

.nav-group {
  padding-bottom: 9px;
  border-bottom: 1px solid #21262d;
}

.nav-group:last-child { border-bottom: none; }

.nav-heading {
  height: 50px;
  padding: 19px 0 11px 20px;
  font-size: 14.5px;
  line-height: 20px;
  font-weight: 600;
  letter-spacing: -0.3px;
  color: #7d8590;
}

.nav-row {
  height: 40px;
  margin: 0 10px;
  padding: 0 10px 1px;
  display: flex;
  align-items: center;
  border-radius: 7.5px;
  white-space: nowrap;
}

.nav-row.strong { font-weight: 600; letter-spacing: -0.45px; }

.nav-row.sub {
  padding: 0 10px 2px 39px;
  font-size: 14.5px;
  letter-spacing: 0;
  position: relative;
}

.nav-row.active { background: #171b21; }

.nav-row.active::before {
  content: "";
  position: absolute;
  left: -10px;
  top: 5px;
  width: 5px;
  height: 30px;
  border-radius: 4px;
  background: #1f6feb;
}

.oct {
  width: 20px;
  height: 20px;
  fill: #7d8590;
  color: #7d8590;
  margin-right: 9px;
}

.chev {
  width: 20px;
  height: 20px;
  fill: #7d8590;
  margin-left: auto;
}

.content {
  width: 960px;
  flex-shrink: 0;
  margin-top: -14px;
  font-size: 17px;
  letter-spacing: -0.31px;
}

.intro {
  line-height: 27px;
  white-space: nowrap;
}

.intro.second { margin-top: 11px; }
.intro b { font-weight: 600; letter-spacing: -0.45px; }

.link {
  color: #2f81f7;
  text-decoration: underline;
  text-underline-offset: 3px;
}

.tabs {
  margin-top: 31px;
  height: 50px;
  display: flex;
  border-bottom: 1px solid #30363d;
}

.tab-item {
  height: 50px;
  padding: 0 20px;
  line-height: 48px;
  color: #7d8590;
  border: 1px solid transparent;
  border-top-left-radius: 7.5px;
  border-top-right-radius: 7.5px;
}

.tab-item.selected {
  color: #e6edf3;
  background: #0d1117;
  border-color: #30363d #30363d #0d1117;
}

.section-title {
  font-size: 24px;
  line-height: 32px;
  font-weight: 600;
  letter-spacing: -0.6px;
}

.env-title { margin-top: 34px; }

.blank {
  margin-top: 11px;
  height: 171px;
  padding-top: 44px;
  border: 1px solid #30363d;
  border-radius: 7.5px;
  display: flex;
  flex-direction: column;
  align-items: center;
}

.blank-text {
  line-height: 26px;
  color: #7d8590;
}

.btn {
  display: flex;
  align-items: center;
  justify-content: center;
  height: 40px;
  margin-top: 21px;
  padding: 0 16px;
  background: #21262d;
  border: 1px solid #363b42;
  border-radius: 7.5px;
  font-weight: 600;
  letter-spacing: -0.45px;
  white-space: nowrap;
}

.section-head {
  margin-top: 51px;
  display: flex;
  align-items: center;
  justify-content: space-between;
}

.btn-green {
  margin-top: 0;
  background: #238636;
  border-color: #2e9a45;
  color: #fff;
}

.secrets {
  margin-top: 10px;
  border: 1px solid #30363d;
  border-radius: 7.5px;
  overflow: hidden;
}

.secrets-head {
  height: 44px;
  display: flex;
  align-items: center;
  padding: 0 135px 0 19px;
  background: #161b22;
  border-bottom: 1px solid #30363d;
  font-size: 14.5px;
  letter-spacing: -0.1px;
}

.col-name { font-weight: 600; }
.sort { width: 22px; height: 16px; margin-left: 9px; }
.col-updated { margin-left: auto; color: #7d8590; }

.secret-row {
  height: 61px;
  display: flex;
  align-items: center;
  padding-left: 19px;
  font-size: 14.5px;
  letter-spacing: -0.1px;
  border-bottom: 1px solid #30363d;
}

.secret-row:last-child { border-bottom: none; height: 60px; }

.lock-oct {
  fill: #e6edf3;
  margin: 0 10px 0 0;
}

.secret-name {
  font-family: "Liberation Mono", monospace;
  font-size: 13.7px;
  letter-spacing: 0;
}

.secret-age {
  margin-left: auto;
  margin-right: 41px;
}

.action {
  margin-right: 0;
  fill: #6e7681;
  width: 20px;
  height: 20px;
}

.secret-age + .action { margin-right: 25px; }
.action:last-child { margin-right: 30px; }

.status-bubble {
  position: absolute;
  left: 0;
  bottom: 0;
  width: 467px;
  height: 32px;
  padding: 4px 2px;
  background: #404246;
  color: #434549;
  font-size: 15.5px;
  letter-spacing: -0.2px;
  white-space: nowrap;
  overflow: hidden;
  mix-blend-mode: lighten;
}

.scrollbar {
  width: 18px;
  flex-shrink: 0;
  display: flex;
  flex-direction: column;
  background: #424242;
}

.scroll-arrow { width: 18px; height: 20px; }
.scroll-before { height: 155px; }
.scroll-thumb { height: 563px; background: #686868; }
.scroll-after { flex: 1; }

/* Windows taskbar */
.taskbar {
  height: 60px;
  flex-shrink: 0;
  display: flex;
  align-items: center;
  padding-bottom: 2px;
  background: #1c2630;
  border-top: 1px solid #3c4550;
}

.start { width: 29px; height: 29px; margin-left: 26px; }

.search {
  width: 275px;
  height: 40px;
  margin: 0 3px 0 17px;
  padding: 0 4px 0 14px;
  display: flex;
  align-items: center;
  border-radius: 20px;
  background: #3a434b;
  border: 1px solid #4a535b;
  color: #d9dde1;
  font-size: 16.5px;
}

.search-icon { width: 20px; height: 20px; margin-right: 11px; }
.frog { width: 62px; height: 34px; margin-left: auto; }

.task-item {
  width: 55px;
  height: 57px;
  position: relative;
  display: flex;
  align-items: center;
  justify-content: center;
}

.task-icon { width: 30px; height: 30px; }

.task-item.current::before {
  content: "";
  position: absolute;
  left: 3px;
  right: 3px;
  top: 4px;
  bottom: 3px;
  border-radius: 5px;
  background: #2c3742;
}

.task-item.current .task-icon { position: relative; }
.opera-task { color: #e8173f; }

.dot {
  position: absolute;
  left: 50%;
  bottom: 4px;
  width: 8px;
  height: 4px;
  margin-left: -4px;
  border-radius: 2px;
  background: #9aa0a6;
}

.dot-blue {
  width: 20px;
  margin-left: -10px;
  background: #4cc2ff;
}

.badge {
  position: absolute;
  top: 7px;
  left: 27px;
  width: 19px;
  height: 19px;
  border-radius: 50%;
  font-size: 13px;
  line-height: 19px;
  text-align: center;
}

.badge-pink { background: #ff9aa5; color: #20242a; }
.badge-red { background: #c4281c; color: #fff; left: 30px; }

.new-tag {
  position: absolute;
  left: 18px;
  bottom: 7px;
  width: 21px;
  font-size: 7px;
  font-weight: 700;
  line-height: 9px;
  text-align: center;
  color: #07302e;
}

.tray {
  margin-left: auto;
  display: flex;
  align-items: center;
  padding-right: 26px;
  color: #fff;
}

.tray-icon { width: 22px; height: 20px; margin-left: 8px; }
.tray-wifi { margin-left: 18px; }

.clock {
  width: 85px;
  margin-left: 7px;
  padding-bottom: 2px;
  display: flex;
  flex-direction: column;
  align-items: flex-end;
  font-size: 14.5px;
  line-height: 20px;
}

.bell { width: 18px; height: 20px; margin-left: 10px; }
```
